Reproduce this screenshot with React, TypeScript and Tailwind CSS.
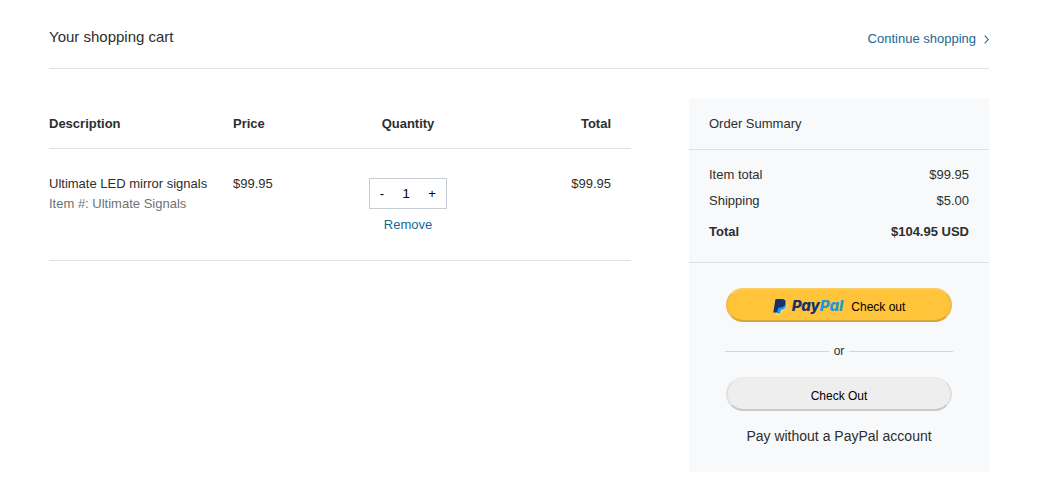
import { useState } from "react";

const unitPrice = 99.95;
const shipping = 5;
const money = (value: number) => `$${value.toFixed(2)}`;

function PayPalMark() {
  return (
    <svg viewBox="0 0 14 17" className="h-[17px] w-3.5 shrink-0" aria-hidden="true">
      <path
        d="M5 4.200H12C13.300 5 13.700 6.200 13.400 7.800C12.900 10.500 11.100 12.200 8.700 12.200H8.300L7.600 16H3.500Z"
        fill="#1b9ad6"
        stroke="#fff3cf"
        strokeWidth="0.800"
      />
      <path
        d="M2.500 1H9C11.800 1 13 2.400 12.500 5C12 8 10 9.400 7.200 9.400H5.900C5.500 9.400 5.200 9.600 5.100 10L4.300 14.500H0.300Z"
        fill="#17316f"
      />
    </svg>
  );
}

function Stepper({ value, onChange }: { value: number; onChange: (next: number) => void }) {
  return (
    <div className="flex h-[31px] w-[78px] items-center border border-[#c5cdd5] bg-white text-black">
      <button
        type="button"
        aria-label="Decrease quantity"
        className="h-full w-6 shrink-0"
        onClick={() => onChange(Math.max(1, value - 1))}
      >
        -
      </button>
      <input
        aria-label="Quantity"
        inputMode="numeric"
        value={value}
        onChange={(event) => onChange(Math.max(1, Number(event.target.value) || 1))}
        className="h-full w-full min-w-0 text-center outline-none"
      />
      <button
        type="button"
        aria-label="Increase quantity"
        className="h-full w-7 shrink-0"
        onClick={() => onChange(value + 1)}
      >
        +
      </button>
    </div>
  );
}

export default function App() {
  const [quantity, setQuantity] = useState(1);
  const itemTotal = unitPrice * quantity;

  return (
    <main className="bg-white pr-[50px] pb-3 pl-[49px] font-['Liberation_Sans',Arial,sans-serif] text-[13px] leading-5 text-[#2c2e2f]">
      <header className="flex items-end justify-between border-b border-[#dfe3e6] pt-[27px] pb-[19px]">
        <h1 className="pb-0.5 text-[15px] leading-5">Your shopping cart</h1>
        <a href="#shop" className="flex items-center gap-2 text-[#1a6794]">
          Continue shopping
          <svg viewBox="0 0 5 9" className="h-[9px] w-[5px]" aria-hidden="true">
            <path d="M.7.700 4.200 4.500.7 8.300" fill="none" stroke="currentColor" strokeWidth="1.100" />
          </svg>
        </a>
      </header>

      <div className="flex items-start gap-[58px] pt-[29px]">
        <table className="min-w-0 flex-1 table-fixed">
          <colgroup>
            <col className="w-[184px]" />
            <col />
            <col className="w-[78px]" />
            <col className="w-[184px]" />
          </colgroup>
          <thead>
            <tr className="border-b border-[#dfe3e6]">
              <th scope="col" className="pt-4 pb-3.5 text-left">Description</th>
              <th scope="col" className="pt-4 pb-3.5 text-left">Price</th>
              <th scope="col" className="pt-4 pb-3.5 text-center">Quantity</th>
              <th scope="col" className="pt-4 pr-5 pb-3.5 text-right">Total</th>
            </tr>
          </thead>
          <tbody>
            <tr className="border-b border-[#dfe3e6] align-top">
              <td className="pt-[25px]">
                <p>Ultimate LED mirror signals</p>
                <p className="text-[#6c7378]">Item #: Ultimate Signals</p>
              </td>
              <td className="pt-[25px]">{money(unitPrice)}</td>
              <td className="pt-[29px] pb-[25px] text-center">
                <Stepper value={quantity} onChange={setQuantity} />
                <button type="button" className="mt-1.5 text-[#1a6794]">
                  Remove
                </button>
              </td>
              <td className="pt-[25px] pr-5 text-right">{money(itemTotal)}</td>
            </tr>
          </tbody>
        </table>

        <aside className="w-[300px] shrink-0 bg-[#f7f9fb] pb-[26px]">
          <h2 className="border-b border-[#dce0e4] px-5 pt-4 pb-[15px]">Order Summary</h2>
          <dl className="border-b border-[#dce0e4] px-5 pt-[15px] pb-5">
            <div className="flex justify-between">
              <dt>Item total</dt>
              <dd>{money(itemTotal)}</dd>
            </div>
            <div className="mt-1.5 flex justify-between">
              <dt>Shipping</dt>
              <dd>{money(shipping)}</dd>
            </div>
            <div className="mt-[11px] flex justify-between font-bold">
              <dt>Total</dt>
              <dd>{money(itemTotal + shipping)} USD</dd>
            </div>
          </dl>

          <div className="flex flex-col px-9 pt-[25px]">
            <button
              type="button"
              className="mx-px flex h-[34px] items-center justify-center rounded-full border-2 border-[#f0bc48] border-t-[#f9cb62] border-b-[#d9a53c] bg-[#ffc439] pt-0.5 text-[12px] text-black"
            >
              <PayPalMark />
              <span className="ml-[5px] font-['Inter',sans-serif] text-[15px] font-extrabold text-[#17316f] italic">
                Pay<span className="text-[#1b9ad6]">Pal</span>
              </span>
              <span className="mt-0.5 ml-2">Check out</span>
            </button>
            <div className="mt-[19px] mb-4 flex items-center gap-[5px] text-[12px] leading-5">
              <span className="h-px flex-1 bg-[#d3d6d9]" />
              or
              <span className="h-px flex-1 bg-[#d3d6d9]" />
            </div>
            <button
              type="button"
              className="mx-px h-[34px] rounded-full border-2 border-[#e0e0e0] border-t-[#ececec] border-b-[#c9c9c9] bg-[#eeeeee] pt-1 text-[12px] text-black"
            >
              Check Out
            </button>
            <p className="mt-[15px] text-center text-[14px] leading-5">Pay without a PayPal account</p>
          </div>
        </aside>
      </div>
    </main>
  );
}
